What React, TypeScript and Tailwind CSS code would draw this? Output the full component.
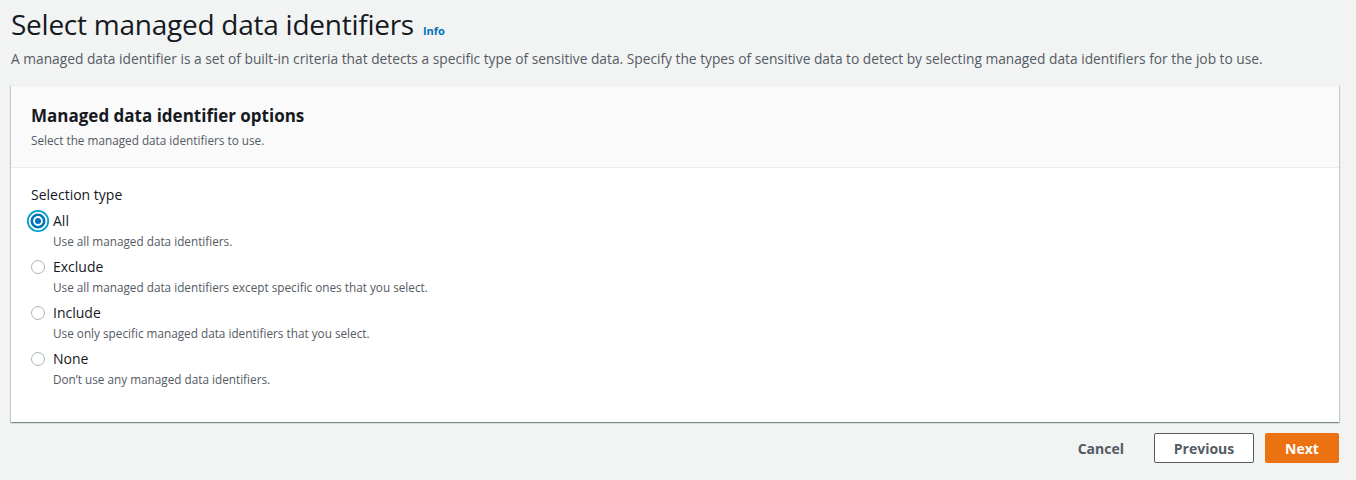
import React from "react";

const options = [
  { label: "All", desc: "Use all managed data identifiers.", checked: true },
  { label: "Exclude", desc: "Use all managed data identifiers except specific ones that you select.", checked: false },
  { label: "Include", desc: "Use only specific managed data identifiers that you select.", checked: false },
  { label: "None", desc: "Don’t use any managed data identifiers.", checked: false },
];

function Radio({ checked }: { checked: boolean }) {
  if (checked) {
    return (
      <svg width="24" height="24" viewBox="0 0 24 24" className="-m-[5px] shrink-0">
        <circle cx="12" cy="12" r="10.2" fill="none" stroke="#00a1c9" strokeWidth="1.8" />
        <circle cx="12" cy="12" r="6.2" fill="#ffffff" stroke="#0073bb" strokeWidth="2.6" />
        <circle cx="12" cy="12" r="3" fill="#0073bb" />
      </svg>
    );
  }
  return (
    <svg width="24" height="24" viewBox="0 0 24 24" className="-m-[5px] shrink-0">
      <circle cx="12" cy="12" r="6.5" fill="#ffffff" stroke="#aab7b8" strokeWidth="1" />
    </svg>
  );
}

export default function App() {
  return (
    <div
      className="min-h-[480px] w-full bg-[#f2f3f3] pl-[11px] pr-[17px] pt-[6px] text-[#16191f]"
      style={{ fontFamily: '"Open Sans", "Noto Sans", Arial, sans-serif' }}
    >
      <div className="flex items-baseline gap-[9px]">
        <h1 className="text-[28px] leading-[36px] font-normal tracking-[-0.25px] text-[#16191f]">
          Select managed data identifiers
        </h1>
        <span className="text-[11px] font-bold text-[#0073bb]">Info</span>
      </div>
      <p className="mt-[7px] text-[13.75px] leading-[20px] text-[#545b64] whitespace-nowrap">
        A managed data identifier is a set of built-in criteria that detects a specific type of sensitive data. Specify the types of sensitive data to detect by selecting managed data identifiers for the job to use.
      </p>
      <div className="mt-[16px] border-t border-[#eaeded] bg-white shadow-[0_1px_1px_0_rgba(0,28,36,0.3),1px_1px_1px_0_rgba(0,28,36,0.15),-1px_1px_1px_0_rgba(0,28,36,0.15)]">
        <div className="border-b border-[#eaeded] bg-[#fafafa] px-[20px] pt-[17px] pb-[19px]">
          <h2 className="text-[17px] leading-[26px] font-bold text-[#16191f]">Managed data identifier options</h2>
          <p className="mt-[3px] text-[11.75px] leading-[16px] text-[#545b64]">Select the managed data identifiers to use.</p>
        </div>
        <div className="px-[20px] pt-[17px] pb-[33px]">
          <div className="text-[14px] leading-[20px] text-[#16191f]">Selection type</div>
          <div className="mt-[6px] flex flex-col gap-[6px]">
            {options.map((o) => (
              <div key={o.label} className="flex flex-col">
                <div className="flex h-[20px] items-center gap-[8px]">
                  <Radio checked={o.checked} />
                  <span className="text-[14px] leading-[20px] text-[#16191f]">{o.label}</span>
                </div>
                <div className="pl-[22px] text-[11.75px] leading-[20px] text-[#545b64]">{o.desc}</div>
              </div>
            ))}
          </div>
        </div>
      </div>
      <div className="mt-[11px] flex items-center justify-end">
        <button className="px-[20px] h-[30px] text-[14px] font-bold text-[#545b64]">Cancel</button>
        <button className="ml-[10px] h-[30px] w-[100px] rounded-[2px] border border-[#545b64] bg-white text-[14px] font-bold text-[#545b64]">
          Previous
        </button>
        <button className="ml-[11px] h-[30px] w-[74px] rounded-[2px] bg-[#ec7211] text-[14px] font-bold text-white">
          Next
        </button>
      </div>
    </div>
  );
}
